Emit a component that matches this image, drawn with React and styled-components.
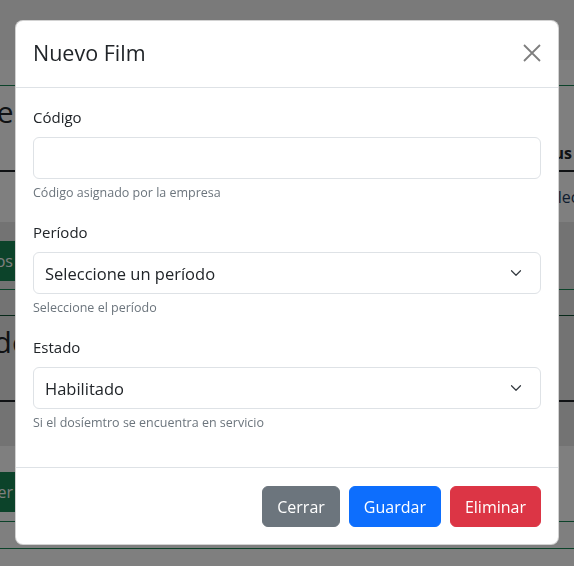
import React from 'react'
import styled, { createGlobalStyle } from 'styled-components'

const GlobalStyle = createGlobalStyle`
  * { box-sizing: border-box; }
  html, body { margin: 0; padding: 0; }
  body {
    font-family: "Open Sans", "Noto Sans", sans-serif;
    color: #212529;
    background: #fff;
    overflow: hidden;
  }
`

const Chevron = () => (
  <svg width="16" height="12" viewBox="0 0 16 16" fill="none">
    <path d="m2 5 6 6 6-6" stroke="#343a40" strokeWidth="1.6" strokeLinecap="round" strokeLinejoin="round" />
  </svg>
)

const CloseX = () => (
  <svg width="18" height="18" viewBox="0 0 18 18" fill="none">
    <path d="M1 1l16 16M17 1L1 17" stroke="#000" strokeWidth="1.8" />
  </svg>
)

const App = () => {
  return (
    <>
      <GlobalStyle />
      {/* page behind the modal */}
      <Page>
        <NavBar />
        <SubBar />
        <Row $h={50} $top={8}>
          <LeftEdge><Heading $cut={13}>Volúmenes</Heading></LeftEdge>
        </Row>
        <Row $h={36} $border="2px solid #212529">
          <LeftEdge />
          <RightEdge><HeadCell>Status</HeadCell></RightEdge>
        </Row>
        <Row $h={50}>
          <LeftEdge />
          <RightEdge $start><LinkText>Seleccionar</LinkText></RightEdge>
        </Row>
        <Band>
          <Row $h={68} $border="1px solid #198754" $top={19}>
            <LeftEdge><GreenButton>Todos</GreenButton></LeftEdge>
          </Row>
          <Row $h={26} $border="1px solid #0f5132" />
          <Row $h={86} $border="2px solid #212529" $top={8}>
            <LeftEdge><Heading $cut={15}>Periodo</Heading></LeftEdge>
          </Row>
          <Row $h={44} />
        </Band>
        <Row $h={76} $border="1px solid #198754" $top={26}>
          <LeftEdge><GreenButton>Nuevo Filtrer</GreenButton></LeftEdge>
        </Row>
        <Row $h={27} $border="1px solid #198754" />
      </Page>

      <Backdrop />

      <Dialog role="dialog">
        <Header>
          <Title>Nuevo Film</Title>
          <CloseButton aria-label="Close"><CloseX /></CloseButton>
        </Header>

        <Body>
          <Group>
            <Label>Código</Label>
            <Input type="text" />
            <Help>Código asignado por la empresa</Help>
          </Group>
          <Group>
            <Label>Período</Label>
            <Select>
              <span>Seleccione un período</span>
              <Chevron />
            </Select>
            <Help>Seleccione el período</Help>
          </Group>
          <Group>
            <Label>Estado</Label>
            <Select>
              <span>Habilitado</span>
              <Chevron />
            </Select>
            <Help>Si el dosíemtro se encuentra en servicio</Help>
          </Group>
        </Body>

        <Footer>
          <Button $bg="#6c757d">Cerrar</Button>
          <Button $bg="#0d6efd">Guardar</Button>
          <Button $bg="#dc3545">Eliminar</Button>
        </Footer>
      </Dialog>
    </>
  )
}

export default App

// ---------- background page ----------
const Page = styled.div`
  height: 566px;
  overflow: hidden;
  background: #fff;
`
const NavBar = styled.div`
  height: 60px;
  background: #f4f4f4;
`
const SubBar = styled.div`
  height: 26px;
  border-bottom: 1px solid #198754;
`
const Row = styled.div`
  height: ${p => p.$h}px;
  display: flex;
  justify-content: space-between;
  align-items: ${p => (p.$top ? 'flex-start' : 'center')};
  padding-top: ${p => p.$top || 0}px;
  border-bottom: ${p => p.$border || 'none'};
`
const LeftEdge = styled.div`
  width: 15px;
  display: flex;
  justify-content: flex-end;
  overflow: hidden;
  white-space: nowrap;
`
const RightEdge = styled.div`
  width: 15px;
  display: flex;
  justify-content: ${p => (p.$start ? 'flex-start' : 'flex-end')};
  overflow: hidden;
  white-space: nowrap;
  padding-right: ${p => (p.$start ? 0 : 2)}px;
`
const Heading = styled.span`
  font-size: 30px;
  line-height: 1.2;
  flex-shrink: 0;
  margin-right: ${p => -p.$cut}px;
`
const HeadCell = styled.span`
  font-weight: 700;
  font-size: 16px;
  flex-shrink: 0;
`
const LinkText = styled.span`
  font-size: 16px;
  flex-shrink: 0;
  margin-left: -19px;
  color: #1d3b5e;
`
const GreenButton = styled.span`
  flex-shrink: 0;
  height: 40px;
  display: flex;
  align-items: center;
  padding: 0 12px;
  margin-right: -10px;
  background: #198754;
  color: #fff;
  font-size: 16px;
`
const Band = styled.div`
  background: #e6e6e6;
`

// ---------- modal ----------
const Backdrop = styled.div`
  position: fixed;
  inset: 0;
  background: rgba(0, 0, 0, 0.5);
`
const Dialog = styled.div`
  position: fixed;
  top: 20px;
  left: 15px;
  width: 544px;
  background: #fff;
  border: 1px solid rgba(0, 0, 0, 0.175);
  border-radius: 8px;
  display: flex;
  flex-direction: column;
`
const Header = styled.div`
  height: 67px;
  padding: 0 17px 0 17px;
  display: flex;
  align-items: center;
  justify-content: space-between;
  border-bottom: 1px solid #dee2e6;
`
const Title = styled.h5`
  margin: 0 0 3px;
  font-size: 21.5px;
  font-weight: 400;
  line-height: 1.2;
`
const CloseButton = styled.button`
  width: 18px;
  height: 18px;
  padding: 0;
  margin-bottom: 2px;
  border: 0;
  background: transparent;
  opacity: 0.5;
  display: flex;
  align-items: center;
  justify-content: center;
  cursor: pointer;
`
const Body = styled.div`
  padding: 17px 17px 17px 17px;
`
const Group = styled.div`
  margin-bottom: 18px;
`
const Label = styled.label`
  display: block;
  font-size: 15px;
  line-height: 24px;
  margin-bottom: 8px;
`
const Input = styled.input`
  display: block;
  width: 100%;
  height: 42px;
  padding: 0 11px;
  font-family: inherit;
  font-size: 17px;
  color: #212529;
  border: 1px solid #dee2e6;
  border-radius: 6px;
  outline: none;
`
const Select = styled.div`
  height: 42px;
  padding: 0 16px 0 11px;
  display: flex;
  align-items: center;
  justify-content: space-between;
  font-size: 16.5px;
  border: 1px solid #dee2e6;
  border-radius: 6px;
  background: #fff;
`
const Help = styled.div`
  margin-top: 4px;
  font-size: 12.5px;
  line-height: 19px;
  color: #6c757d;
`
const Footer = styled.div`
  border-top: 1px solid #dee2e6;
  padding: 18px 17px 17px;
  display: flex;
  justify-content: flex-end;
  gap: 9px;
`
const Button = styled.button`
  height: 41px;
  padding: 0 14px;
  font-family: inherit;
  font-size: 16px;
  color: #fff;
  background: ${p => p.$bg};
  border: 1px solid ${p => p.$bg};
  border-radius: 6px;
  cursor: pointer;
`
